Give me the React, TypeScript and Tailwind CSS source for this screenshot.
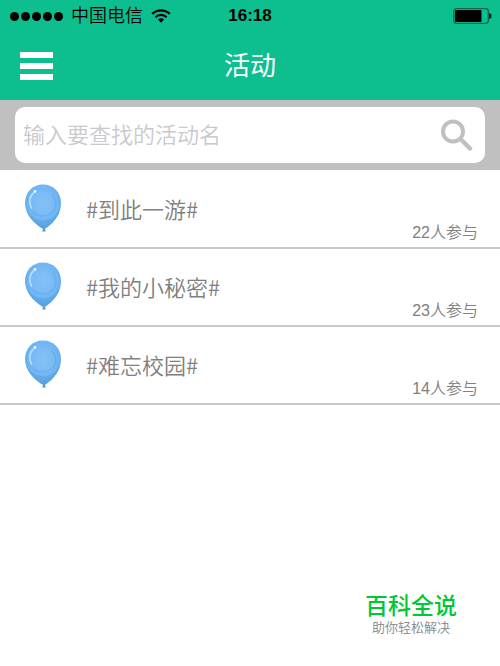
import { useState } from 'react'

interface Activity {
  id: number
  title: string
  count: number
}

const ACTIVITIES: Activity[] = [
  { id: 1, title: '到此一游', count: 22 },
  { id: 2, title: '我的小秘密', count: 23 },
  { id: 3, title: '难忘校园', count: 14 },
]

function WifiIcon() {
  return (
    <svg viewBox="0 0 20 14" className="w-5 h-[14px]" fill="none" stroke="black" strokeWidth="2.2" aria-hidden="true">
      <path d="M1.2 4.9C6.2 0.1 13.8 0.1 18.8 4.9" />
      <path d="M4.4 8.2C7.6 5.2 12.4 5.2 15.6 8.2" />
      <path d="M6.9 10.6C8.7 8.8 11.3 8.8 13.1 10.6L10 13.7Z" fill="black" stroke="none" />
    </svg>
  )
}

function BatteryIcon() {
  return (
    <svg viewBox="0 0 39 16" className="w-[39px] h-4" aria-hidden="true">
      <rect x="0.7" y="0.7" width="34.6" height="14.6" rx="2.5" fill="none" stroke="#086b50" strokeWidth="1.3" />
      <rect x="2" y="2" width="26.5" height="12" rx="0.8" fill="black" />
      <path d="M36 5.2h0.8a1.8 2.8 0 0 1 0 5.6h-0.8z" fill="#04281e" />
    </svg>
  )
}

function Balloon() {
  return (
    <svg viewBox="0 0 38 48" className="w-[38px] h-12 shrink-0" aria-hidden="true">
      <defs>
        <radialGradient id="skin" cx="0.5" cy="0.42" r="0.62">
          <stop offset="0" stopColor="#82c0f8" />
          <stop offset="0.65" stopColor="#70b6f3" />
          <stop offset="1" stopColor="#529fe0" />
        </radialGradient>
      </defs>
      <path d="M19.2 44.5L18.2 47.5H21.8L20.8 44.5Z" fill="#5c98ca" />
      <path
        d="M19 0.5C29.5 0.5 37 8.4 37 19C37 29.5 31 38.5 20 45.5C8.5 39 1 29.5 1 19C1 8.4 8.500 0.5 19 0.5Z"
        fill="url(#skin)"
      />
      <path d="M2.8 27C8 34 14 37 22 36C29 35 34 30 36.5 23C35.5 32 29 40 20 45.3C11 40.5 5 34 2.8 27Z" fill="#4795db" opacity="0.35" />
      <ellipse cx="19" cy="19" rx="12" ry="11.5" fill="#91c2f5" opacity="0.2" />
      <path d="M9 28C14 34 25 33 30 26.5C33 22 32 14.5 28 11" fill="none" stroke="#4a98e3" strokeWidth="1.2" opacity="0.3" />
      <path d="M7.5 24C4.5 19 5.500 12 9.5 9" fill="none" stroke="#d0e9ff" strokeWidth="1.8" strokeLinecap="round" opacity="0.7" />
      <circle cx="11" cy="7.5" r="1.4" fill="#e8f6ff" />
    </svg>
  )
}

function SearchIcon() {
  return (
    <svg viewBox="0 0 32 32" className="w-8 h-8" fill="none" stroke="#c0c0c0" strokeWidth="4" aria-hidden="true">
      <circle cx="12" cy="12.5" r="10" />
      <path d="M19.5 20L29 29.5" strokeWidth="4.5" strokeLinecap="round" />
    </svg>
  )
}

function StatusBar() {
  return (
    <div className="grid grid-cols-[1fr_auto_1fr] items-center h-8 px-2 text-black">
      <div className="flex items-center gap-2">
        <div className="flex gap-0.5 pl-0.5">
          {[0, 1, 2, 3, 4].map(i => (
            <span key={i} className="w-[9px] h-[9px] rounded-full bg-black" />
          ))}
        </div>
        <span className="text-[18px] font-[350]">中国电信</span>
        <WifiIcon />
      </div>
      <span className="text-[17px] font-bold">16:18</span>
      <div className="flex justify-end">
        <BatteryIcon />
      </div>
    </div>
  )
}

function ActivityRow({ activity }: { activity: Activity }) {
  return (
    <li className="border-b-2 border-[#c8c8c8]">
      <a href={`#activity-${activity.id}`} className="flex h-[76px] pl-6 pr-[22px] pb-0.5 text-[#808080]">
        <span className="self-center">
          <Balloon />
        </span>
        <span className="self-center ml-6 text-[22px] font-[350] font-['Noto_Sans_CJK_SC',sans-serif]">
          #{activity.title}#
        </span>
        <span className="self-end ml-auto text-[16px] leading-6 font-[350]">{activity.count}人参与</span>
      </a>
    </li>
  )
}

export default function App() {
  const [query, setQuery] = useState('')
  const visible = ACTIVITIES.filter(a => a.title.includes(query))

  return (
    <div className="flex flex-col min-h-screen bg-white font-['Liberation_Sans','Noto_Sans_CJK_SC',sans-serif]">
      <header className="bg-[#0dbf8f]">
        <StatusBar />
        <div className="grid grid-cols-[1fr_auto_1fr] items-center h-[68px] px-5">
          <button type="button" aria-label="菜单" className="flex flex-col justify-self-start gap-[5px] w-[33px]">
            <span className="h-1.5 bg-white" />
            <span className="h-1.5 bg-white" />
            <span className="h-1.5 bg-white" />
          </button>
          <h1 className="text-[26px] font-normal text-white">活动</h1>
        </div>
      </header>

      {/* Search */}
      <form className="px-[15px] py-[7px] bg-[#c0c0c0]" onSubmit={e => e.preventDefault()}>
        <div className="flex items-center h-14 pl-2 pr-3 rounded-[10px] bg-white">
          <input
            type="text"
            aria-label="输入要查找的活动名"
            placeholder="输入要查找的活动名"
            value={query}
            onChange={e => setQuery(e.target.value)}
            className="flex-1 min-w-0 h-full pt-0.5 text-[22px] font-[350] text-[#808080] placeholder:text-[#c9c9ce] outline-none"
          />
          <button type="submit" aria-label="搜索">
            <SearchIcon />
          </button>
        </div>
      </form>

      <ul className="pt-px">
        {visible.map(a => (
          <ActivityRow key={a.id} activity={a} />
        ))}
      </ul>

      <footer className="self-end mt-auto pr-[43px] pb-[30px] text-center">
        <p className="text-[23px] leading-7 font-medium text-[#00c832]">百科全说</p>
        <p className="text-[13px] leading-4 text-[#909090]">助你轻松解决</p>
      </footer>
    </div>
  )
}
